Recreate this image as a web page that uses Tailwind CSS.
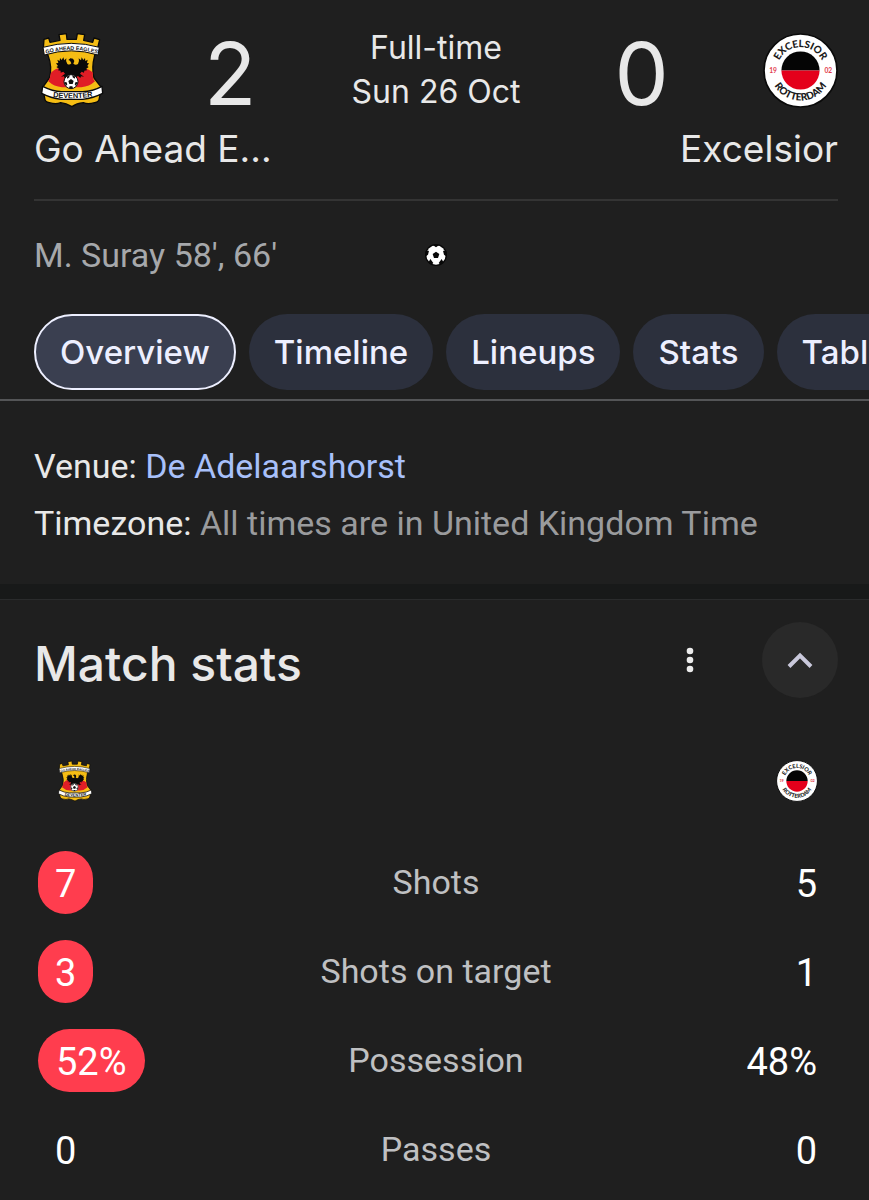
<!DOCTYPE html>
<html lang="en">
<head>
<meta charset="utf-8">
<meta name="viewport" content="width=device-width, initial-scale=1">
<title>Go Ahead Eagles 2 – 0 Excelsior</title>
<script src="https://cdn.jsdelivr.net/npm/@tailwindcss/browser@4"></script>
</head>
<body class="min-h-screen overflow-x-hidden bg-[#1f1f1f] font-['Roboto',sans-serif] text-[#e8e8e8]">
<svg class="hidden" aria-hidden="true">
  <defs>
    <path id="eagles-arc" d="M20 80Q106 52 194 80"/>
    <path id="eagles-base" d="M50 207Q108 215 172 205"/>
    <path id="ex-top" d="M42 112A70 70 0 0 1 182 112"/>
    <path id="ex-bottom" d="M22 112A90 90 0 0 0 202 112"/>
  </defs>
  <symbol id="eagles" viewBox="0 0 216 252">
    <path fill="#f5bd14" stroke="#0a0a0a" stroke-width="4" stroke-linejoin="round" d="M24 34L38 30 42 43 72 37 69 20 91 17 93 34H121L124 17 146 20 143 37 170 43 174 30 191 35 185 60 176 82Q166 120 174 150L196 178 190 210Q190 222 176 224 155 230 142 224 122 226 108 236 90 226 74 224 60 230 40 224 26 222 26 210L20 178 40 150Q50 120 36 82L22 60Z"/>
    <path fill="#e01d26" d="M44 136Q56 120 78 119H136Q160 122 171 134 168 150 177 160 160 176 136 178H78Q54 176 37 160 44 148 44 136Z"/>
    <path fill="#fff" stroke="#0a0a0a" stroke-width="3" stroke-linejoin="round" d="M21 58Q106 34 190 58L186 81Q106 56 25 81z"/>
    <text font-family="Liberation Sans" font-weight="700" font-size="16" fill="#111" text-anchor="middle"><textPath href="#eagles-arc" startOffset="50%">GO AHEAD EAGLES</textPath></text>
    <path fill="#0a0a0a" d="M103 91l8 1 4 7-3 8q7 6 14 1 5-8 2-17l7 6 2-9 5 8 5-6 1 9 7-4-2 10 6 1-5 8 4 3-7 5 2 5-8 1-1 6-7-3-5 6 12 9-9-1-2 5-7-6-6 4h-20l-7-4-7 7-2-6-9 1 12-9-5-6-8 3 0-6-8-1 3-5-8-5 5-3-6-8 7-1-3-10 7 4 1-9 5 6 5-8 3 9 6-6q-3 10 3 17 7 4 12-2l-4-8-5-2z"/>
    <circle cx="105" cy="161" r="21" fill="#fff" stroke="#111" stroke-width="3"/>
    <path fill="#111" d="M105 153l8 6-3 9H100l-3-9zM92 146l9-5-1 7-6 4zM118 146l-9-5 1 7 6 4zM85 163l6-1 3 7-4 5zM125 163l-6-1-3 7 4 5zM99 181l2-6h8l2 6z"/>
    <path fill="#fff" stroke="#0a0a0a" stroke-width="4" stroke-linejoin="round" d="M20 175Q50 190 76 191H140Q170 190 198 175L200 196Q172 210 140 214H76Q44 210 17 196z"/>
    <text font-family="Liberation Sans" font-weight="700" font-size="22" fill="#111" text-anchor="middle"><textPath href="#eagles-base" startOffset="50%">DEVENTER</textPath></text>
  </symbol>
  <symbol id="excelsior" viewBox="0 0 224 224">
    <circle cx="112" cy="112" r="109" fill="#fff" stroke="#0a0a0a" stroke-width="5"/>
    <path fill="#050505" d="M55 112a57 57 0 0 1 114 0z"/>
    <path fill="#e4001b" d="M55 112a57 57 0 0 0 114 0z"/>
    <g font-family="Lato" font-weight="900" fill="#1b1b1b" text-anchor="middle">
      <text font-size="30"><textPath href="#ex-top" startOffset="50%">EXCELSIOR</textPath></text>
      <text font-size="30"><textPath href="#ex-bottom" startOffset="50%">ROTTERDAM</textPath></text>
      <text x="30" y="119" font-size="20" font-weight="700" fill="#e23a4a">19</text>
      <text x="195" y="119" font-size="20" font-weight="700" fill="#e23a4a">02</text>
    </g>
  </symbol>
</svg>

<header class="pt-6 pr-[31px] pl-[34px]">
  <div class="grid grid-cols-[75px_1fr_auto_1fr_75px] items-center text-center font-['Inter',sans-serif]">
    <svg class="mx-auto h-[84px] w-[72px]" role="img" aria-label="Go Ahead Eagles crest"><use href="#eagles"/></svg>
    <span class="pt-2 text-[86px] leading-[84px]">2</span>
    <p class="text-[32px] leading-[44px]">Full-time<br>Sun 26 Oct</p>
    <span class="pt-2 text-[86px] leading-[84px]">0</span>
    <svg class="size-[75px]" role="img" aria-label="Excelsior crest"><use href="#excelsior"/></svg>
  </div>
  <div class="mt-[7px] flex justify-between border-b-2 border-[#343434] pb-6 font-['Inter',sans-serif] text-[37px] leading-[52px]">
    <span>Go Ahead E...</span>
    <span>Excelsior</span>
  </div>
  <div class="mt-8 grid grid-cols-[1fr_auto_1fr] items-center text-[34px] leading-[44px] text-[#a6a8ab]">
    <span>M. Suray 58', 66'</span>
    <svg class="size-[22px]" viewBox="0 0 66 66" role="img" aria-label="Goal">
      <circle cx="33" cy="33" r="33" fill="#080808"/>
      <circle cx="33" cy="33" r="29" fill="#fff"/>
      <path fill="#080808" d="M33 23l10 7-4 12H27l-4-12zM22 2h22L33 10zM1 22l11-2-3 12-8 6zM65 22l-11-2 3 12 8 6zM11 54l5-9 9 12-6 6zM55 54l-5-9-9 12 6 6z"/>
    </svg>
  </div>
</header>

<nav class="mt-[37px] flex gap-[13px] overflow-hidden border-b-2 border-[#545557] pb-[9px] pl-[34px] font-['Inter',sans-serif] text-[33px] leading-[44px] font-medium whitespace-nowrap text-[#edefff]" aria-label="Match sections">
  <button class="h-[76px] shrink-0 rounded-full border-2 border-[#edefff] bg-[#3a3f50] px-6" aria-current="page">Overview</button>
  <button class="h-[76px] shrink-0 rounded-full bg-[#2c303d] px-[25px]">Timeline</button>
  <button class="h-[76px] shrink-0 rounded-full bg-[#2c303d] px-[25px]">Lineups</button>
  <button class="h-[76px] shrink-0 rounded-full bg-[#2c303d] px-[25px]">Stats</button>
  <button class="h-[76px] shrink-0 rounded-full bg-[#2c303d] px-[25px]">Table</button>
</nav>

<section class="pt-[37px] pr-[31px] pb-8 pl-[34px] text-[34px] leading-[57px]">
  <p>Venue: <a href="#" class="text-[#a8c0fa]">De Adelaarshorst</a></p>
  <p>Timezone: <span class="text-[#9a9b9d]">All times are in United Kingdom Time</span></p>
</section>

<main class="border-t-[15px] border-[#181919]">
  <div class="flex items-center border-t border-[#2a2b2c] pt-[22px] pr-[31px] pl-[34px]">
    <h2 class="grow pt-2 font-['Inter',sans-serif] text-[48px] leading-[60px] font-medium">Match stats</h2>
    <button class="mr-[54px] grid h-[76px] w-9 place-items-center" aria-label="More options">
      <svg class="h-[26px] w-2" viewBox="0 0 8 26" fill="#ececec"><circle cx="4" cy="4" r="3.300"/><circle cx="4" cy="13" r="3.300"/><circle cx="4" cy="22" r="3.300"/></svg>
    </button>
    <button class="grid size-[76px] place-items-center rounded-full bg-[#292929]" aria-label="Collapse">
      <svg class="h-4 w-[26px]" viewBox="0 0 26 16" fill="none" stroke="#c9c8db" stroke-width="4"><path d="M2 14.500 13 3.500l11 11"/></svg>
    </button>
  </div>
  <div class="mt-[60px] flex items-center justify-between pr-[51px] pl-[55px]">
    <svg class="h-[46px] w-10" role="img" aria-label="Go Ahead Eagles"><use href="#eagles"/></svg>
    <svg class="size-[42px]" role="img" aria-label="Excelsior"><use href="#excelsior"/></svg>
  </div>
  <table class="mt-[34px] w-full table-fixed text-[38px] text-white">
    <tbody>
      <tr class="h-[89px]">
        <td class="w-1/4 pl-[38px]"><span class="inline-block rounded-full bg-[#ff3d4e] px-[17px] pt-[3px] leading-[60px]">7</span></td>
        <th scope="row" class="pl-[3px] text-[34px] font-normal text-[#bfc0c2]">Shots</th>
        <td class="w-1/4 pt-[3px] pr-[52px] text-right">5</td>
      </tr>
      <tr class="h-[89px]">
        <td class="pl-[38px]"><span class="inline-block rounded-full bg-[#ff3d4e] px-[17px] pt-[3px] leading-[60px]">3</span></td>
        <th scope="row" class="pl-[3px] text-[34px] font-normal text-[#bfc0c2]">Shots on target</th>
        <td class="pt-[3px] pr-[52px] text-right">1</td>
      </tr>
      <tr class="h-[89px]">
        <td class="pl-[38px]"><span class="inline-block rounded-full bg-[#ff3d4e] px-[18px] pt-[3px] leading-[60px]">52%</span></td>
        <th scope="row" class="pl-[3px] text-[34px] font-normal text-[#bfc0c2]">Possession</th>
        <td class="pt-[3px] pr-[52px] text-right">48%</td>
      </tr>
      <tr class="h-[89px]">
        <td class="pl-[38px]"><span class="inline-block px-[17px] pt-[3px] leading-[60px]">0</span></td>
        <th scope="row" class="pl-[3px] text-[34px] font-normal text-[#bfc0c2]">Passes</th>
        <td class="pt-[3px] pr-[52px] text-right">0</td>
      </tr>
    </tbody>
  </table>
</main>
</body>
</html>
